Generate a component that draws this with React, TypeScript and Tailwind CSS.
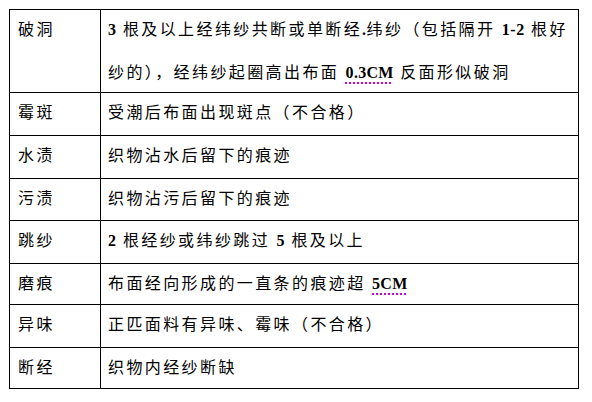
import React from "react";

const L = ({ children }: { children: React.ReactNode }) => (
  <b className="font-bold tracking-[0.5px]">{children}</b>
);

const U = ({ children }: { children: React.ReactNode }) => (
  <b className="font-bold tracking-[0.3px] underline decoration-dotted decoration-[#d000d0] underline-offset-[4px] decoration-[1.5px]">
    {children}
  </b>
);

const rows: { name: string; h: string; content: React.ReactNode }[] = [
  {
    name: "破洞",
    h: "h-[83px]",
    content: (
      <>
        <div className="h-[46px] leading-[40px]">
          <L>3</L> 根及以上经纬纱共断或单断经<L>.</L>纬纱（包括隔开 <L>1-2</L> 根好
        </div>
        <div className="h-[36px] leading-[34px]">
          纱的），经纬纱起圈高出布面 <U>0.3CM</U> 反面形似破洞
        </div>
      </>
    ),
  },
  { name: "霉斑", h: "h-[43px]", content: <>受潮后布面出现斑点（不合格）</> },
  { name: "水渍", h: "h-[43px]", content: <>织物沾水后留下的痕迹</> },
  { name: "污渍", h: "h-[42px]", content: <>织物沾污后留下的痕迹</> },
  {
    name: "跳纱",
    h: "h-[43px]",
    content: (
      <>
        <L>2</L> 根经纱或纬纱跳过 <L>5</L> 根及以上
      </>
    ),
  },
  {
    name: "磨痕",
    h: "h-[41px]",
    content: (
      <>
        布面经向形成的一直条的痕迹超 <U>5CM</U>
      </>
    ),
  },
  { name: "异味", h: "h-[43px]", content: <>正匹面料有异味、霉味（不合格）</> },
  { name: "断经", h: "h-[41px]", content: <>织物内经纱断缺</> },
];

export default function App() {
  return (
    <div className="w-[592px] h-[402px] bg-white pl-[9px] pt-[9px] font-['Liberation_Serif','Noto_Sans_CJK_SC',serif] text-[16px] text-black tracking-[2.4px]">
      <table className="border-collapse w-[570px] table-fixed">
        <colgroup>
          <col className="w-[91px]" />
          <col />
        </colgroup>
        <tbody>
          {rows.map((r, i) => (
            <tr key={i} className={r.h}>
              <td className={`border border-black align-top pl-[8px] leading-[40px] ${r.h}`}>{r.name}</td>
              <td className={`border border-black align-top pl-[7px] pr-0 leading-[40px] whitespace-nowrap ${r.h}`}>
                {r.content}
              </td>
            </tr>
          ))}
        </tbody>
      </table>
    </div>
  );
}
